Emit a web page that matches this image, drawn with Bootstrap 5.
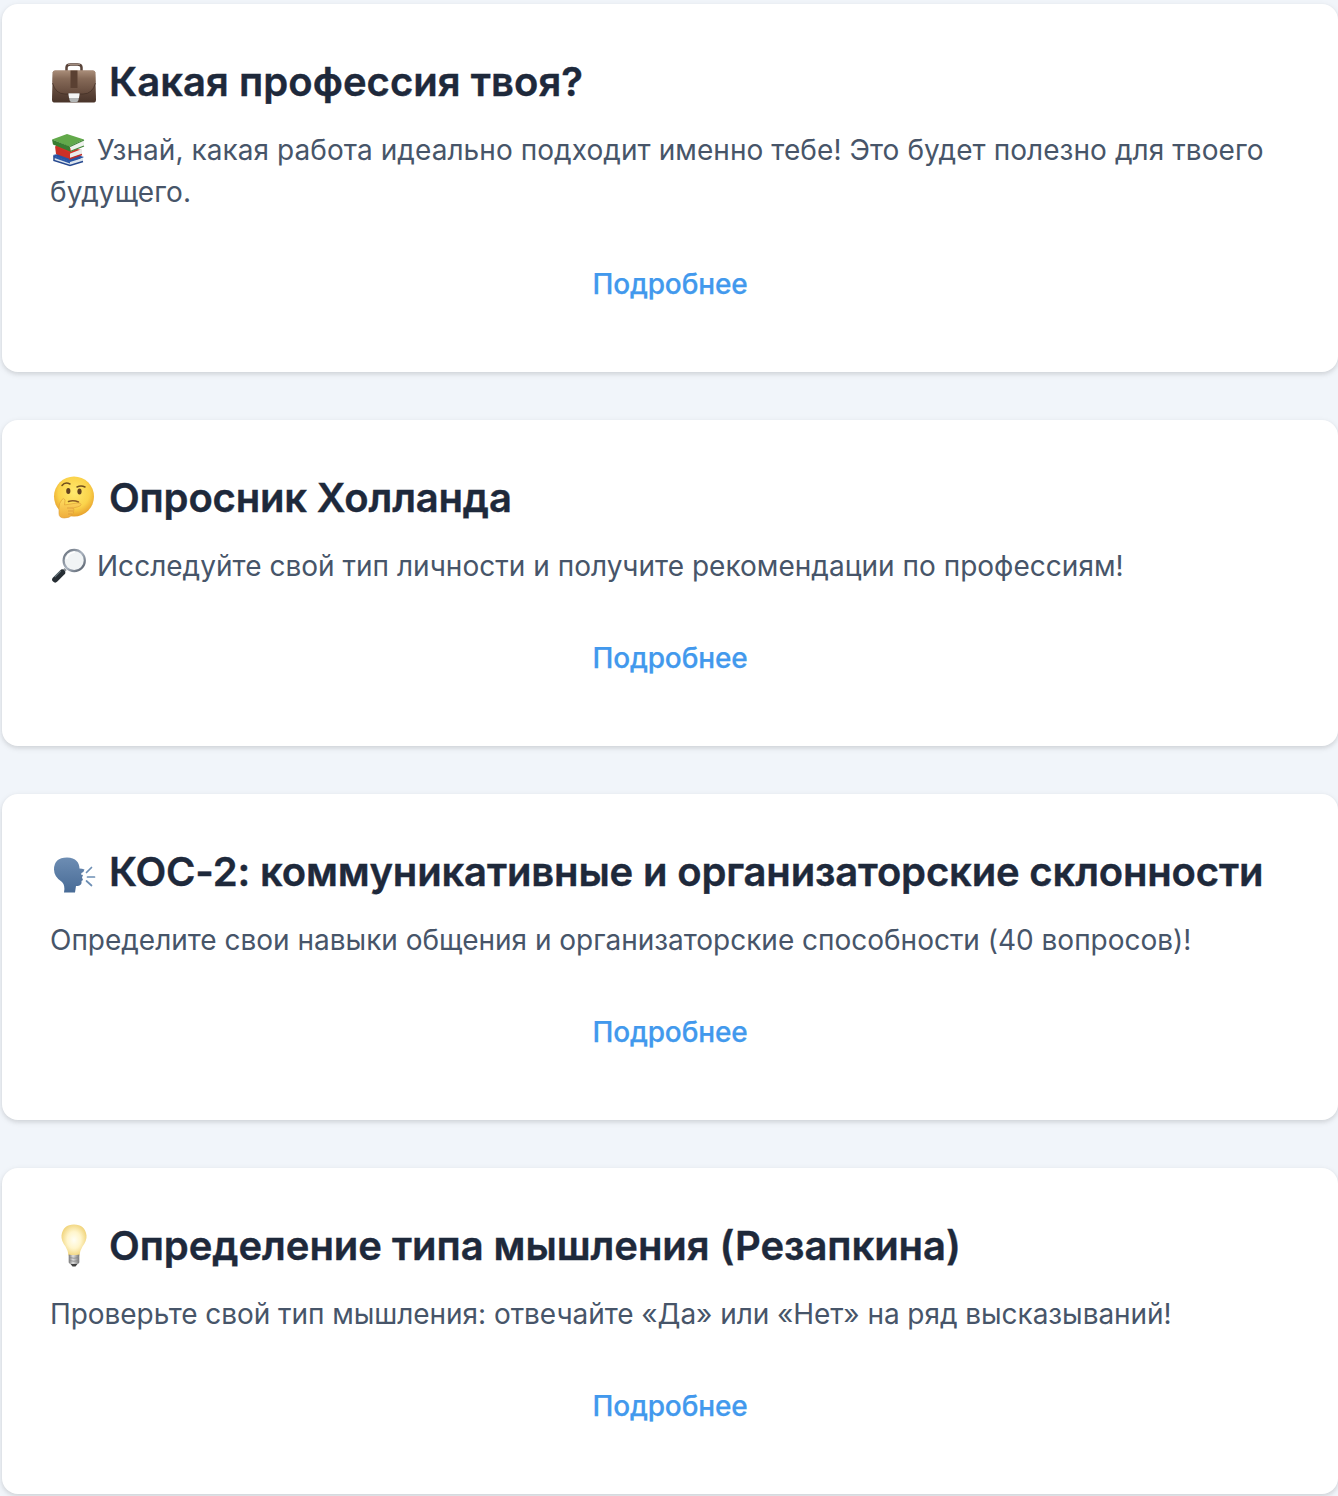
<!DOCTYPE html>
<html lang="ru">
<head>
<meta charset="utf-8">
<meta name="viewport" content="width=device-width, initial-scale=1">
<title>Тесты</title>
<link rel="stylesheet" href="https://cdn.jsdelivr.net/npm/bootstrap@5.3.0/dist/css/bootstrap.min.css">
<style>
body{background:#f1f5fa;font-family:Inter,"Liberation Sans",sans-serif;overflow-x:hidden}
.tests{padding:4px 0 2px 2px;gap:48px}
.test-card{border:0;border-radius:16px;padding:48px;box-shadow:0 2px 6px rgba(0,0,0,.1),0 2px 4px rgba(0,0,0,.06)}
.test-title{font-size:40px;line-height:60px;font-weight:600;color:#1e293b;margin:0 0 17px;white-space:nowrap;-webkit-text-stroke:.4px #1e293b}
.test-text{font-size:28px;line-height:42px;color:#475569;margin:0 0 31px}
.test-link{font-size:28px;line-height:42px;font-weight:500;color:#4299ed;padding:19px 32px;border:0;letter-spacing:-.15px;-webkit-text-stroke:.25px #4299ed}
.emo-lg{width:48px;height:48px;margin:-4px 11px 0 0;vertical-align:middle;display:inline-block}
.emo-sm{width:36px;height:36px;margin:-4px 11px 0 0;vertical-align:middle;display:inline-block}
.profession .test-title{letter-spacing:.05px}
.profession .test-text{letter-spacing:.065px}
.holland .test-title{letter-spacing:-.17px}
.holland .test-text{letter-spacing:.02px}
.kos .test-title{letter-spacing:-.16px}
.kos .test-text{letter-spacing:-.015px}
.thinking .test-title{letter-spacing:-.05px}
.thinking .test-text{letter-spacing:-.055px}
</style>
</head>
<body>
<main class="tests d-flex flex-column">
<article class="card test-card profession">
<h2 class="test-title"><svg class="emo-lg" viewBox="0 0 48 48"><defs><linearGradient id="bag" x2="0" y2="1"><stop stop-color="#a18472"/><stop offset=".3" stop-color="#735848"/><stop offset="1" stop-color="#49342a"/></linearGradient><linearGradient id="flap" x2="0" y2="1"><stop stop-color="#a98d79"/><stop offset=".35" stop-color="#866a58"/><stop offset="1" stop-color="#644a3c"/></linearGradient></defs><path d="M16.500 12V8.500q0-3 4-3h7q4 0 4 3V12" fill="none" stroke="#59443a" stroke-width="2.500"/><path d="M18 5.500h12" stroke="#a08b7e"/><path d="M5 11.500h38q2 0 2.300 2l.7 27q0 3-2 3H4q-2 0-2-3l.7-27q.3-2 2.300-2Z" fill="url(#bag)"/><path d="M5 11.500h38q2 0 2.300 2L45.500 23q-2 12-12.500 12H15Q4.500 35 2.500 23l.2-9.500q.3-2 2.300-2Z" fill="url(#flap)"/><path d="M2.500 24q3 11 12.500 11h18q9.500 0 12.500-11" fill="none" stroke="#3e2b22" opacity=".65"/><path d="M20.500 11.500h7V29h-7z" fill="#5a4032"/><path d="M18.500 34.500h11l-1 6.500q-.3 2-2 2h-5q-1.700 0-2-2Z" fill="#b4b7b7"/><path d="M18.500 34.500h11l-.5 4.500H19z" fill="#f5f6f6"/></svg>Какая профессия твоя?</h2>
<p class="test-text"><svg class="emo-sm" viewBox="0 0 36 36"><path d="m3 23 14-3 17 5-14 7Z" fill="#2854a3"/><path d="m4 24 16 6 13-4v3l-13 5-15-5Z" fill="#dce5ee"/><path d="m3 23 17 6.500v2L4.500 26Z" fill="#2c58a8"/><path d="m4 24 0 4.500 16 5 13-4" fill="none" stroke="#26488f" stroke-width="1.500"/><path d="m6 13 26 5v3l-12 4-14-5Z" fill="#d33427"/><path d="m19 22 13-5v5l-13 5Z" fill="#e8ecec"/><path d="M5 14 20 21v6L6 22Z" fill="#cb3028"/><path d="m19 27 13-4.500" fill="none" stroke="#bd2d29" stroke-width="1.400"/><path d="m20 14.500 14-6v5l-13 6Z" fill="#eef1ec"/><path d="M2 7.500 17 2l17 5.500-15 7Z" fill="#62a94a"/><path d="m2 7.500 18 7v5L3 12.500Z" fill="#397d31"/><path d="m20 14.500 14-6.500M20 19.500l14-5.500" fill="none" stroke="#438739" stroke-width="1.300"/></svg>Узнай, какая работа идеально подходит именно тебе! Это будет полезно для твоего будущего.</p>
<a class="btn test-link align-self-center" href="#">Подробнее</a>
</article>
<article class="card test-card holland">
<h2 class="test-title"><svg class="emo-lg" viewBox="0 2.500 48 48"><defs><radialGradient id="face" cx=".5" cy=".4" r=".6"><stop stop-color="#ffe96e"/><stop offset=".65" stop-color="#fbd34b"/><stop offset="1" stop-color="#e7a02c"/></radialGradient><linearGradient id="hand" x2="0" y2="1"><stop stop-color="#ffdc61"/><stop offset="1" stop-color="#efad3c"/></linearGradient></defs><circle cx="24" cy="24" r="20" fill="url(#face)"/><ellipse cx="18.300" cy="18.500" rx="2.100" ry="2.900" fill="#62411f"/><ellipse cx="29.500" cy="19" rx="2.100" ry="2.900" fill="#62411f"/><path d="M12 13q3-4 8-1.500M27 14.500q4-2 8 0" fill="none" stroke="#72501f" stroke-width="1.500" stroke-linecap="round"/><path d="M18.500 29q5-1.500 10 .5" fill="none" stroke="#8b5b23" stroke-width="1.500" stroke-linecap="round"/><path d="M9 36q-.5-5 3-9 2-2 3 .5l-.5 5L27 30.500q4-.5 4 1.500 0 1.500-3 2.300l-5 1.200q1.500 1.500.5 3.500.5 2-1.500 3-2 3.500-7.500 3.500Q9 45.500 9 41Z" fill="url(#hand)" stroke="#dc9a36" stroke-width=".6"/><path d="M17 35.500h6M18 38.500h5M18 41.500h4" fill="none" stroke="#d8943a" stroke-width=".7"/></svg>Опросник Холланда</h2>
<p class="test-text"><svg class="emo-sm" viewBox="-.7 0 36 36"><defs><linearGradient id="rim" x2="1" y2="1"><stop stop-color="#616a75"/><stop offset=".5" stop-color="#aab3bf"/><stop offset="1" stop-color="#4d5662"/></linearGradient></defs><path d="m15 21-4 4" stroke="#8d9398" stroke-width="3"/><path d="m11.500 24.500-7 7" stroke="#262d33" stroke-width="6" stroke-linecap="round"/><path d="m10 23-6 6" stroke="#65737b" stroke-width="1.200"/><circle cx="23.500" cy="12.500" r="10.600" fill="#f1f4f5" stroke="url(#rim)" stroke-width="2.200"/><path d="M16 11q1-6 8-7" fill="none" stroke="#fff" stroke-width="1.500"/></svg>Исследуйте свой тип личности и получите рекомендации по профессиям!</p>
<a class="btn test-link align-self-center" href="#">Подробнее</a>
</article>
<article class="card test-card kos">
<h2 class="test-title"><svg class="emo-lg" viewBox="0 0 48 48"><defs><linearGradient id="head" x2="0" y2="1"><stop stop-color="#6d8db3"/><stop offset="1" stop-color="#486b96"/></linearGradient></defs><path d="M14 43.500q1.500-7-2-10.500Q4 28 4 20.500 4 8.500 17 8.500c9 0 12.500 5.500 12.500 11q2.500 0 5 1-.5 2.500-3 3.500l-.5 1.500 2 .5-1 2.500 1 2.500-1.500 1q.5 3.500-2 4.500-1.500.5-3.500.5l-1 6.500Z" fill="url(#head)"/><path d="m36.500 23.500 5-5M37.500 28h7M36.500 32l5 4.500" fill="none" stroke="#6c8eb4" stroke-width="1.700" stroke-linecap="round"/></svg>КОС-2: коммуникативные и организаторские склонности</h2>
<p class="test-text">Определите свои навыки общения и организаторские способности (40 вопросов)!</p>
<a class="btn test-link align-self-center" href="#">Подробнее</a>
</article>
<article class="card test-card thinking">
<h2 class="test-title"><svg class="emo-lg" viewBox="0 1.500 48 48"><defs><radialGradient id="glow" cx=".5" cy=".5" r=".6"><stop stop-color="#fffef4"/><stop offset=".45" stop-color="#fff5cb"/><stop offset="1" stop-color="#edcb66"/></radialGradient><linearGradient id="base"><stop stop-color="#777"/><stop offset=".4" stop-color="#ddd"/><stop offset="1" stop-color="#777"/></linearGradient></defs><path d="M18.500 34q0-4-3-9-4.500-6-4-11Q13 3 24 3t12.500 11q.5 5-4 11-3 5-3 9Z" fill="url(#glow)"/><path d="M18.700 33q5.300 1.500 10.600 0v8q-1 2-5.300 2t-5.300-2Z" fill="url(#base)"/><path d="M19 36q5 1.500 10 0M19 39q5 1.500 10 0" fill="none" stroke="#888" stroke-width=".8"/><path d="M20.500 42.500h7L25.500 45h-3Z" fill="#424242"/></svg>Определение типа мышления (Резапкина)</h2>
<p class="test-text">Проверьте свой тип мышления: отвечайте «Да» или «Нет» на ряд высказываний!</p>
<a class="btn test-link align-self-center" href="#">Подробнее</a>
</article>
</main>
<script src="https://cdn.jsdelivr.net/npm/bootstrap@5.3.0/dist/js/bootstrap.bundle.min.js"></script>
</body>
</html>
